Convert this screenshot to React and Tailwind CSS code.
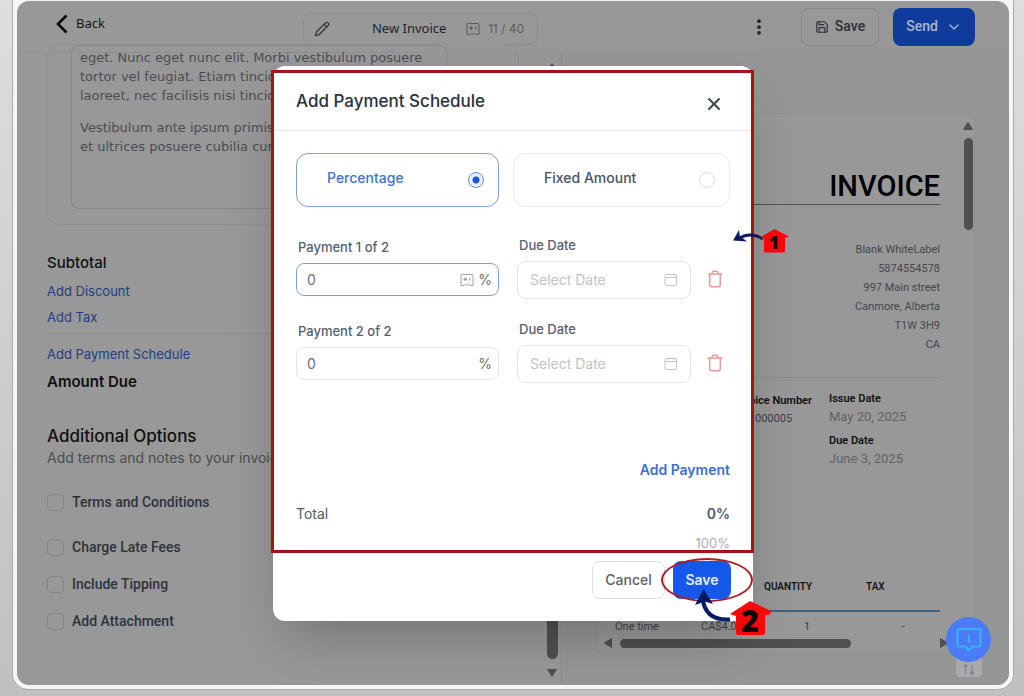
import { useState } from 'react';
import { ChevronDown, Pencil, MoreVertical, Save, X } from 'lucide-react';

const addressLines = [
  'Blank WhiteLabel',
  '5874554578',
  '997 Main street',
  'Canmore, Alberta',
  'T1W 3H9',
  'CA',
];

const options = [
  { id: 'terms', label: 'Terms and Conditions', className: 'mb-6' },
  { id: 'late-fees', label: 'Charge Late Fees', className: 'mb-4' },
  { id: 'tipping', label: 'Include Tipping', className: 'mb-4' },
  { id: 'attachment', label: 'Add Attachment', className: '' },
];

const AutofillIcon = ({ className }) => (
  <svg viewBox="0 0 14 14" fill="none" stroke="currentColor" className={className}>
    <path d="M2 1.500h10q1 0 1 1V12.500H10L8.500 11 7 12.500 5.500 11 4 12.500H1V2.500q0-1 1-1Z" />
    <path d="M5.300 4.500v3.400M3.600 6.200H7" strokeWidth="1.400" />
    <path d="M9.700 5v2.400" strokeWidth="1.200" />
  </svg>
);

const CalendarIcon = () => (
  <svg viewBox="0 0 14 14" fill="none" stroke="currentColor" className="w-3.5 h-3.5">
    <rect x="1" y="1.500" width="11.500" height="11" rx="1.500" />
    <path d="M1 4.500h11.500M4 1v1.500M9.500 1v1.500" />
  </svg>
);

const TrashIcon = () => (
  <svg viewBox="0 0 16 18" fill="none" stroke="currentColor" strokeWidth="1.500" strokeLinecap="round" strokeLinejoin="round" className="w-4 h-[18px]">
    <path d="M1.200 4h13.600M4.800 3.800l.6-1.700q.3-.8 1-.8h3.200q.7 0 1 .8l.6 1.700M2.700 4.200V14.800q0 2 2 2h6.600q2 0 2-2V4.200" />
  </svg>
);

const Arrow = ({ d }) => (
  <svg viewBox="0 0 12 12" className="w-3 h-3 shrink-0" fill="#505050">
    <path d={d} strokeLinejoin="round" stroke="#505050" />
  </svg>
);

const Header = () => (
  <header className="flex items-center h-[52px] shrink-0 pl-[39px] pr-[34px] border-b border-[#8f9090]">
    <button className="flex items-center gap-2 text-[13px] font-['Noto_Sans'] text-[#141414] pb-1.5">
      <svg viewBox="0 0 12 20" className="w-3 h-5" fill="none" stroke="#000" strokeWidth="2.500">
        <path d="M10.500 1.500 2 10l8.500 8.500" />
      </svg>
      Back
    </button>
    <div className="flex items-center w-[235px] h-8 ml-[198px] px-2.5 mt-1 rounded-lg border border-[#8b8c8e] text-[#5a5c60]">
      <Pencil className="w-4 h-4 text-[#33373f]" />
      <input
        aria-label="Invoice name"
        defaultValue="New Invoice"
        className="w-[86px] ml-[42px] bg-transparent font-['Noto_Sans'] text-[13px] text-[#1f2430] outline-none"
      />
      <AutofillIcon className="w-3.5 h-3.5 ml-2" />
      <span className="ml-2 text-[12px] whitespace-nowrap">11 / 40</span>
    </div>
    <button aria-label="More" className="ml-auto mr-8 text-[#222]">
      <MoreVertical className="w-5 h-5" strokeWidth={2.500} />
    </button>
    <button className="flex items-center justify-center gap-1.5 w-[78px] h-[38px] rounded-lg border border-[#85878b] font-[Roboto] text-[14px] font-medium text-[#2a2f38]">
      <Save className="w-3.5 h-3.5" />
      Save
    </button>
    <button className="flex items-center justify-center gap-2 w-[82px] h-[38px] ml-3.5 rounded-lg bg-[#0f3c9c] font-[Roboto] text-[14px] font-medium text-[#a9b4d0]">
      Send
      <ChevronDown className="w-4 h-4" />
    </button>
  </header>
);

const Editor = () => (
  <div className="w-[526px] shrink-0 pl-[30px]">
    <div className="-mt-[9px] mr-6 pl-[23px] pb-[15px] border border-[#8e8f90] rounded-xl">
      <div
        contentEditable
        suppressContentEditableWarning
        role="textbox"
        aria-label="Description"
        className="w-[376px] h-[164px] px-2 pt-[2px] border border-[#868789] rounded-lg font-['DejaVu_Sans'] text-[13px] leading-[19px] text-[#4a4d52] whitespace-nowrap outline-none"
      >
        <p>
          eget. Nunc eget nunc elit. Morbi vestibulum posuere
          <br />
          tortor vel feugiat. Etiam tincidunt
          <br />
          laoreet, nec facilisis nisi tincidunt
        </p>
        <p className="mt-[13px]">
          Vestibulum ante ipsum primis
          <br />
          et ultrices posuere cubilia curae
        </p>
      </div>
    </div>

    <div className="mt-7 flex flex-col items-start text-[#1d3f85]">
      <h3 className="text-[15px] leading-5 font-medium text-[#101010]">Subtotal</h3>
      <a href="#discount" className="mt-2 text-[13px] leading-5">Add Discount</a>
      <a href="#tax" className="mt-1.5 text-[13px] leading-5">Add Tax</a>
      <hr className="w-[472px] mt-1.5 border-[#8b8c8d]" />
      <a href="#schedule" className="mt-2.5 text-[13px] leading-5">Add Payment Schedule</a>
      <h3 className="mt-2 text-[15px] leading-5 font-semibold text-[#101010]">Amount Due</h3>
    </div>

    <h2 className="mt-8 text-[17px] leading-6 font-medium text-[#101010]">Additional Options</h2>
    <p className="text-[14px] leading-5 text-[#4a4c50] whitespace-nowrap">Add terms and notes to your invoice</p>

    <div className="mt-6">
      {options.map((option) => (
        <div key={option.id} className={`flex items-center h-[21px] ${option.className}`}>
          <input
            id={option.id}
            type="checkbox"
            className="appearance-none w-[17px] h-[17px] rounded-sm border border-[#858688]"
          />
          <label htmlFor={option.id} className="ml-2 font-[Roboto] text-[14px] font-medium text-[#2d333e]">
            {option.label}
          </label>
        </div>
      ))}
    </div>
  </div>
);

const Preview = () => (
  <div className="flex-1 min-w-0 pt-[60px] pl-[33px] pr-[34px] border-l border-[#8b8d8c] bg-[#959796] font-[Roboto]">
    <div className="h-[539px] flex flex-col border border-[#909191] bg-[#989898]">
      <div className="flex-1 min-h-0 flex">
        <div className="flex-1 pl-[19px] pr-[22px] pt-[54px]">
          <h1 className="text-right text-[29px] leading-9 font-medium text-black border-b border-[#505050]">INVOICE</h1>
          <address className="mt-[35px] text-right not-italic text-[11px] leading-[19px] text-[#45474c]">
            {addressLines.map((line) => (
              <p key={line}>{line}</p>
            ))}
          </address>
          <hr className="mt-[23px] border-[#8a8b8c]" />
          <div className="flex justify-end gap-[17px] mt-[13px] text-[11px] text-[#101010]">
            <dl className="w-[80px] pt-[2px]">
              <dt className="font-semibold leading-4 text-right whitespace-nowrap">Invoice Number</dt>
              <dd className="pl-[23px] leading-5 text-[#3c3e42]">000005</dd>
            </dl>
            <dl className="w-[111px]">
              <dt className="font-semibold leading-4">Issue Date</dt>
              <dd className="text-[13px] leading-5 text-[#606267]">May 20, 2025</dd>
              <dt className="mt-1.5 font-semibold leading-4">Due Date</dt>
              <dd className="text-[13px] leading-5 text-[#606267]">June 3, 2025</dd>
            </dl>
          </div>
          <table className="w-full mt-[106px] table-fixed text-[11px] text-[#404246]">
            <thead>
              <tr className="h-9 align-top text-left text-[10px] text-[#161616] border-b-2 border-[#41637c]">
                <th className="w-[86px]" />
                <th className="w-[63px]" />
                <th className="w-[102px] pt-1 font-semibold">QUANTITY</th>
                <th className="pt-1 font-semibold">TAX</th>
              </tr>
            </thead>
            <tbody>
              <tr className="h-8">
                <td>One time</td>
                <td>CA$4.00</td>
                <td className="pl-10">1</td>
                <td className="text-center">-</td>
              </tr>
            </tbody>
          </table>
        </div>
        {/* vertical scrollbar */}
        <div className="w-3 flex flex-col items-center gap-1.5 pt-1.5">
          <Arrow d="M6 2.500 10.500 9.500h-9Z" />
          <div className="w-[9px] h-[92px] rounded-full bg-[#505050]" />
        </div>
      </div>
      {/* horizontal scrollbar */}
      <div className="flex items-center h-4 pl-1.5 pr-6">
        <Arrow d="M2.500 6 9.500 1.500v9Z" />
        <div className="w-[231px] h-[9px] ml-1.5 rounded-full bg-[#505050]" />
        <div className="ml-auto">
          <Arrow d="M9.500 6 2.500 1.500v9Z" />
        </div>
      </div>
    </div>
  </div>
);

const TypeCard = ({ label, value, type, setType, className }) => {
  const active = type === value;
  return (
    <label
      className={`flex items-center justify-between h-[54px] pl-[30px] rounded-xl border text-[14px] font-medium ${
        active ? 'border-[#7f9fd8] text-[#3f73d1]' : 'border-[#e9e9eb] text-[#475161]'
      } ${className}`}
    >
      <span className="pb-1">{label}</span>
      <input
        type="radio"
        name="schedule-type"
        checked={active}
        onChange={() => setType(value)}
        className="appearance-none w-4 h-4 rounded-full border border-[#dcdde0] checked:border-[#5f8ee0] checked:bg-[radial-gradient(circle,#1d56d0_0_3px,#e8f0ff_4px)]"
      />
    </label>
  );
};

const PaymentRow = ({ index, focused }) => (
  <div className="flex items-center h-16">
    <div className="w-[203px]">
      <label htmlFor={`amount-${index}`} className="block pl-0.5 text-[13px] leading-5 font-medium text-[#566070]">
        Payment {index} of 2
      </label>
      <div
        className={`flex items-center h-[33px] mt-1.5 pl-2.5 pr-1.5 rounded-lg border text-[14px] text-[#6a6d72] ${
          focused ? 'border-[#7f9fd8]' : 'border-[#e4e5e7]'
        }`}
      >
        <input id={`amount-${index}`} defaultValue="0" className="flex-1 min-w-0 bg-transparent outline-none" />
        {focused && <AutofillIcon className="w-3.5 h-3.5 mr-1 text-[#a0a2a6]" />}
        <span>%</span>
      </div>
    </div>
    <div className="w-[174px] ml-[18px]">
      <label htmlFor={`due-${index}`} className="block pl-0.5 text-[13px] leading-5 font-medium text-[#566070]">
        Due Date
      </label>
      <div className="flex items-center h-[38px] mt-1.5 px-3 rounded-lg border border-[#e4e5e7] text-[14px] text-[#c2c3c6]">
        <input
          id={`due-${index}`}
          placeholder="Select Date"
          className="flex-1 min-w-0 bg-transparent outline-none placeholder:text-[#c2c3c6]"
        />
        <CalendarIcon />
      </div>
    </div>
    <button aria-label={`Delete payment ${index}`} className="ml-4 mt-6 text-[#ea9a96]">
      <TrashIcon />
    </button>
  </div>
);

const Annotations = () => (
  <div className="absolute inset-0 pointer-events-none">
    <div className="absolute -left-0.5 -right-px top-1 h-[483px] border-3 border-[#a31414]" />
    <div className="absolute left-[388px] top-[492px] w-[92px] h-[44px] rounded-[50%] border-2 border-[#b01c24]" />
    <svg viewBox="0 0 58 28" className="absolute left-[459px] top-[162px] w-[58px] h-7 overflow-visible">
      <path d="M6 11Q18 3 31 11" fill="none" stroke="#0d1a5e" strokeWidth="3" />
      <path d="M1 12.500 7 2l.8 6L15 13.500Z" fill="#0d1a5e" />
      <path d="M42.500 1 57 8.500 53 9.500V23Q53 24.500 51 24.500H33.500Q32 24.500 32 23V10L28 9.500Z" fill="#fb0509" />
      <text x="42" y="21" textAnchor="middle" fontFamily="Open Sans" fontWeight="800" fontSize="18" fill="#200000">1</text>
    </svg>
    <svg viewBox="0 0 80 60" className="absolute left-[421px] top-[522px] w-20 h-[60px] overflow-visible">
      <path d="M8.500 10Q11 33 36 31.500" fill="none" stroke="#041a66" strokeWidth="4" />
      <path d="M9.500 1 19 16 11 13.500 1 17Z" fill="#041a66" />
      <path d="M56 13 77 23 76 26.500 71 27V45Q71 47 69 47H44Q42 47 42 45V28L36 26Z" fill="#fb0509" />
      <text x="56" y="44" textAnchor="middle" fontFamily="Open Sans" fontWeight="800" fontSize="30" fill="#100000">2</text>
    </svg>
  </div>
);

const PaymentModal = () => {
  const [type, setType] = useState('percentage');

  return (
    <div className="absolute inset-0 flex items-center justify-center">
      <div role="dialog" aria-label="Add Payment Schedule" className="relative w-[480px] rounded-xl bg-white shadow-2xl">
        <div className="flex items-center justify-between h-[65px] pl-[23px] pr-[29px] pt-2 border-b border-[#e8e8ea]">
          <h2 className="text-[17px] font-medium text-[#2a313e]">Add Payment Schedule</h2>
          <button aria-label="Close" className="mt-1 text-[#414a58]">
            <X className="w-5 h-5" strokeWidth={2.500} />
          </button>
        </div>

        <div className="max-h-[419px] px-[23px] pt-[22px] overflow-hidden">
          <div className="flex gap-3.5">
            <TypeCard label="Percentage" value="percentage" type={type} setType={setType} className="w-[203px] pr-3.5" />
            <TypeCard label="Fixed Amount" value="fixed" type={type} setType={setType} className="flex-1 pr-3.5" />
          </div>
          <div className="flex flex-col gap-5 mt-7">
            <PaymentRow index={1} focused />
            <PaymentRow index={2} />
          </div>
          <button className="block ml-auto mt-[77px] text-[14px] leading-5 font-semibold text-[#3d70d2]">Add Payment</button>
          <div className="flex justify-between mt-6 text-[14px] leading-5 text-[#505a68]">
            <span>Total</span>
            <span className="font-semibold">0%</span>
          </div>
          <p className="mt-[9px] text-right text-[13px] leading-5 text-[#a9adb4]">100%</p>
        </div>

        <div className="flex justify-end gap-2 pt-[11px] pb-[22px] pr-[22px] text-[14px]">
          <button className="w-[73px] h-[38px] rounded-lg border border-[#dcdde0] font-medium text-[#5a626f]">Cancel</button>
          <button className="w-[58px] h-[38px] rounded-lg bg-[#1659ea] font-semibold text-[#e4ebff]">Save</button>
        </div>

        <Annotations />
      </div>
    </div>
  );
};

const App = () => (
  <div className="h-screen flex bg-gradient-to-b from-[#dedede] to-[#c0c0c0] pl-3 pb-[6px] pr-[10px] font-[Inter] overflow-hidden">
    <div className="flex-1 flex px-1 pb-1 pt-px bg-[#f6f6f6] rounded-b-2xl border-x border-b border-[#aaa]">
      <main className="relative flex-1 flex flex-col overflow-hidden rounded-xl bg-[#989898]">
        <Header />
        <div className="flex-1 min-h-0 flex">
          <Editor />
          {/* editor scrollbar */}
          <div className="w-[18px] shrink-0 flex flex-col items-center gap-2 pt-2 pb-1.5">
            <Arrow d="M6 2.500 10.500 9.500h-9Z" />
            <div className="mt-auto w-[11px] h-[200px] rounded-full bg-[#505050]" />
            <Arrow d="M6 9.500 10.500 2.500h-9Z" />
          </div>
          <Preview />
        </div>
        <PaymentModal />

        {/* chat launcher */}
        <div className="absolute right-[18px] bottom-2 flex flex-col items-center">
          <button aria-label="Help" className="z-10 w-[45px] h-[45px] rounded-full bg-[#4b7cf6] flex items-center justify-center">
            <svg viewBox="0 0 26 26" className="w-[26px] h-[26px]" fill="none" stroke="#39b0fb" strokeWidth="2" strokeLinejoin="round">
              <path d="M3 2h20q1.500 0 1.500 1.500V18q0 1.500-1.500 1.500h-6.500L13 23.500 9.500 19.500H3Q1.500 19.500 1.500 18V3.500Q1.500 2 3 2Z" />
              <path d="M13 7.500v8.500" />
            </svg>
          </button>
          <div className="-mt-2 flex items-end justify-center w-[26px] h-[23px] rounded bg-[#a9a9ae] text-[#85858a]">
            <svg viewBox="0 0 16 14" className="w-4 h-3.5" fill="none" stroke="currentColor" strokeWidth="1.300">
              <path d="M4.500 11V1.500L2.500 4M4.500 1.500 6.500 4M11 2v9.500L9 9M11 11.500 13 9" />
            </svg>
          </div>
        </div>
      </main>
    </div>
  </div>
);

export default App;
